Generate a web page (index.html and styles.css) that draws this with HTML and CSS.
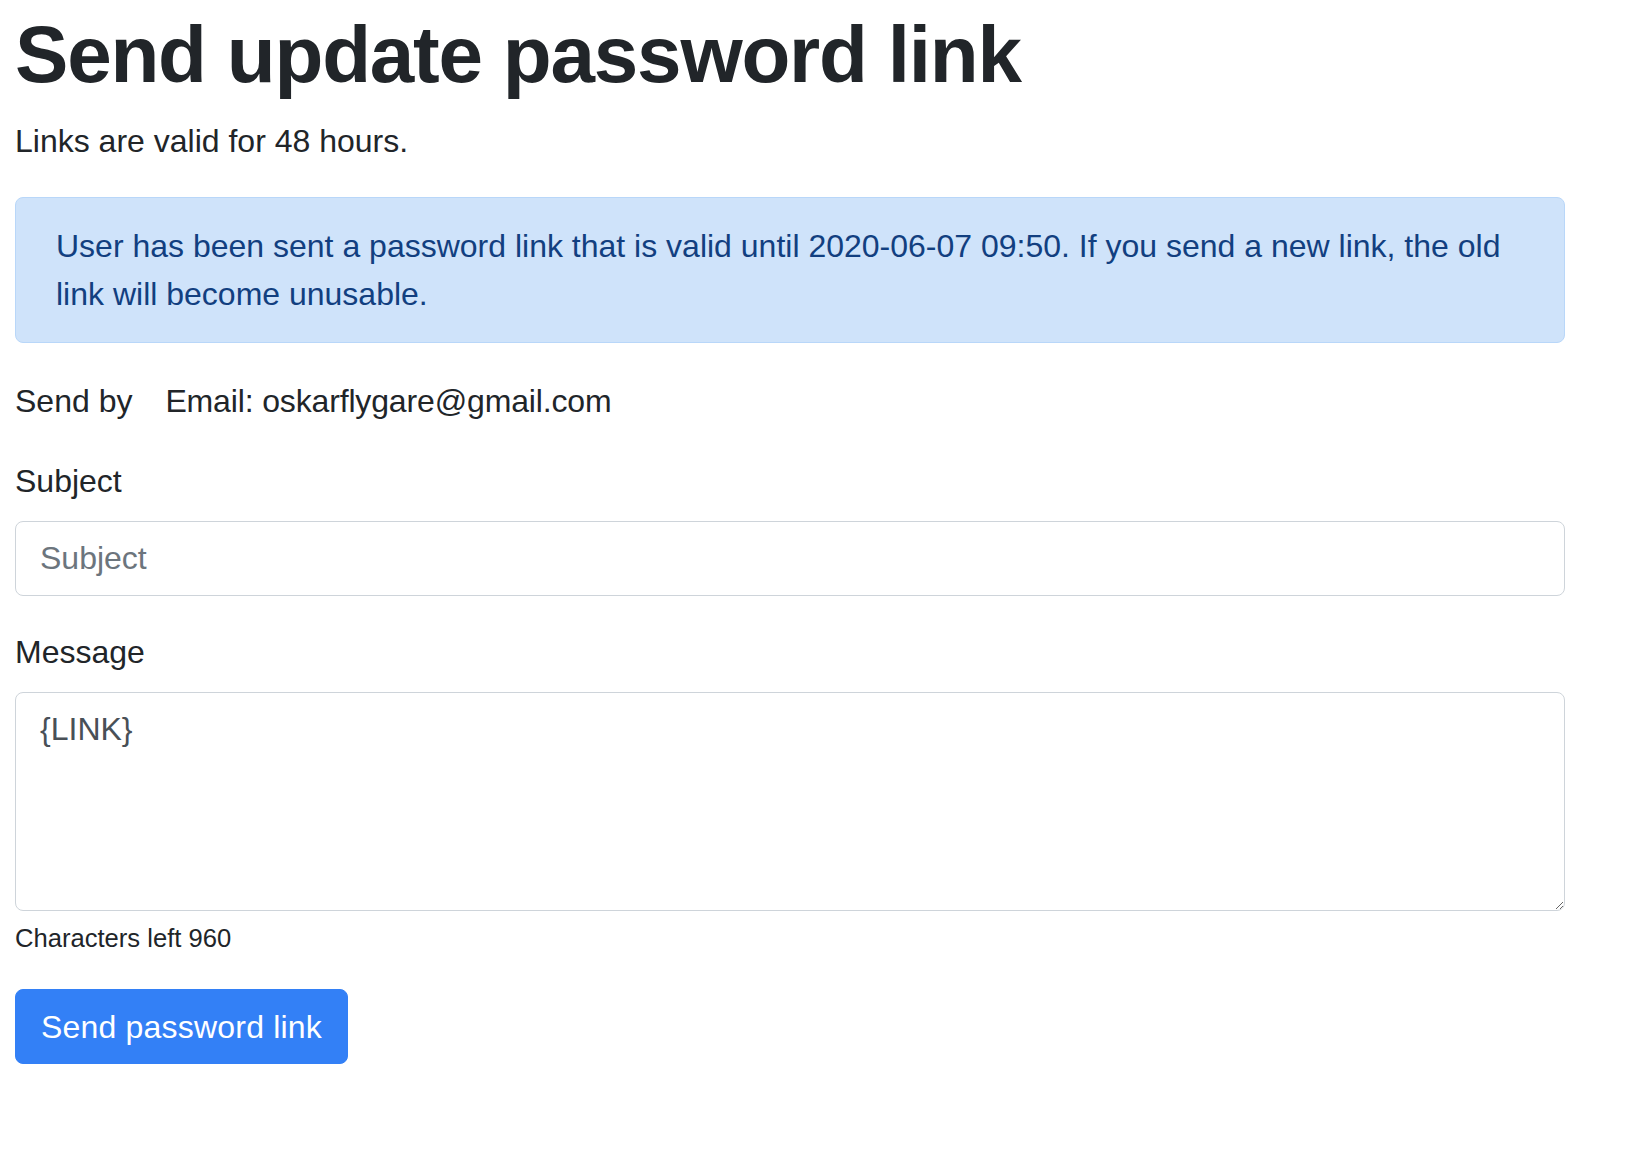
FILE: index.html
```html
<!DOCTYPE html>
<html lang="en">
<head>
<meta charset="utf-8">
<title>Send update password link</title>
<link rel="stylesheet" href="styles.css">
</head>
<body>
<main class="container">
  <h1 class="title">Send update password link</h1>
  <p class="lead-text">Links are valid for 48 hours.</p>
  <div class="alert">User has been sent a password link that is valid until 2020-06-07 09:50. If you send a new link, the old link will become unusable.</div>
  <form class="form">
    <div class="form-group send-by">
      <span class="send-label">Send by</span>
      <span class="send-value">Email: oskarflygare@gmail.com</span>
    </div>
    <div class="form-group">
      <label class="label" for="subject">Subject</label>
      <input class="form-control" id="subject" type="text" placeholder="Subject">
    </div>
    <div class="form-group">
      <label class="label" for="message">Message</label>
      <textarea class="form-control textarea" id="message" rows="4">{LINK}</textarea>
      <small class="form-text">Characters left 960</small>
    </div>
    <button type="button" class="btn">Send password link</button>
  </form>
</main>
</body>
</html>
```
FILE: styles.css
```css
* { box-sizing: border-box; }
html, body { margin: 0; }
body {
  padding: 5px 15px;
  font-family: "Liberation Sans", Arial, sans-serif;
  font-size: 32px;
  line-height: 48px;
  color: #212529;
  background: #fff;
}
.container { width: 1550px; }
.title {
  margin: 0 0 14px;
  padding-top: 2px;
  font-size: 80px;
  line-height: 96px;
  font-weight: 700;
  letter-spacing: -1.2px;
  color: #212529;
}
.lead-text { margin: 0 0 32px; }
.alert {
  margin: 0 0 32px;
  padding: 24px 40px;
  background: #cfe3fa;
  border: 1px solid #b9d7f9;
  border-radius: 8px;
  color: #123f80;
}
.form { margin: 0; padding-top: 2px; }
.form-group { margin-bottom: 32px; }
.send-by { display: flex; gap: 33px; }
.send-value { letter-spacing: -0.15px; }
.label { display: block; margin-bottom: 16px; }
.form-control {
  display: block;
  width: 100%;
  height: 75px;
  padding: 12px 24px;
  font-family: "Liberation Sans", Arial, sans-serif;
  font-size: 32px;
  line-height: 48px;
  color: #495057;
  background: #fff;
  border: 1px solid #ced4da;
  border-radius: 8px;
  outline: none;
}
.form-control::placeholder { color: #6c757d; opacity: 1; }
.textarea { height: 219px; resize: vertical; }
.form-text {
  display: block;
  margin-top: 8px;
  font-size: 25.6px;
  line-height: 38.4px;
  color: #212529;
}
.btn {
  display: inline-block;
  width: 333px;
  height: 75px;
  padding: 12px 24px;
  font-family: "Liberation Sans", Arial, sans-serif;
  font-size: 32px;
  line-height: 48px;
  letter-spacing: 0.2px;
  text-align: center;
  color: #fff;
  background: #3380f6;
  border: 1px solid #3380f6;
  border-radius: 8px;
  cursor: pointer;
}
```
